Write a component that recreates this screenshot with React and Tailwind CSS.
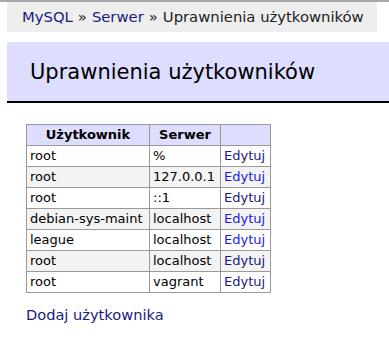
import React from 'react';

const users = [
  { user: 'root', host: '%', visited: false },
  { user: 'root', host: '127.0.0.1', visited: true },
  { user: 'root', host: '::1', visited: false },
  { user: 'debian-sys-maint', host: 'localhost', visited: true },
  { user: 'league', host: 'localhost', visited: true },
  { user: 'root', host: 'localhost', visited: false },
  { user: 'root', host: 'vagrant', visited: false },
];

const App = () => {
  return (
    <div className="min-h-[337px] bg-white text-black border-t-2 border-[#a8a8a8]" style={{ fontFamily: '"DejaVu Sans", Verdana, sans-serif' }}>
      {/* Breadcrumb */}
      <div className="ml-[7px] w-[370px] h-[30px] bg-[#eeeeee] flex items-center pl-[15px] text-[14.8px] text-[#222]">
        <a href="#" className="text-[#1a1a80]">MySQL</a>
        <span className="mx-[5px]">»</span>
        <a href="#" className="text-[#1a1a80]">Serwer</a>
        <span className="mx-[5px]">»</span>
        <span>Uprawnienia użytkowników</span>
      </div>

      {/* Header */}
      <div className="mt-[10px] ml-[7px] h-[61px] bg-[#ddddff] border-b-2 border-black flex items-center pl-[23px]">
        <h1 className="text-[21px] font-normal pt-[3px]">Uprawnienia użytkowników</h1>
      </div>

      {/* Table */}
      <table className="mt-[21px] ml-[26px] border-collapse text-[13px]">
        <thead>
          <tr className="bg-[#ddddff] h-[21px]">
            <th className="border border-[#999] w-[123px] font-bold text-center">Użytkownik</th>
            <th className="border border-[#999] w-[71px] font-bold text-center">Serwer</th>
            <th className="border border-[#999] w-[50px]"></th>
          </tr>
        </thead>
        <tbody>
          {users.map((u, i) => (
            <tr key={i} className={`h-[21px] ${i % 2 === 1 ? 'bg-[#f3f3f3]' : 'bg-white'}`}>
              <td className="border border-[#999] px-[3px] whitespace-nowrap">{u.user}</td>
              <td className="border border-[#999] px-[3px] whitespace-nowrap">{u.host}</td>
              <td className="border border-[#999] px-[3px] whitespace-nowrap">
                <a href="#" className={u.visited ? 'text-[#1a1aee]' : 'text-[#1a1a80]'}>Edytuj</a>
              </td>
            </tr>
          ))}
        </tbody>
      </table>

      {/* Add user */}
      <div className="mt-[11px] ml-[26px] text-[14.6px]">
        <a href="#" className="text-[#1a1a80]">Dodaj użytkownika</a>
      </div>
    </div>
  );
};

export default App;
